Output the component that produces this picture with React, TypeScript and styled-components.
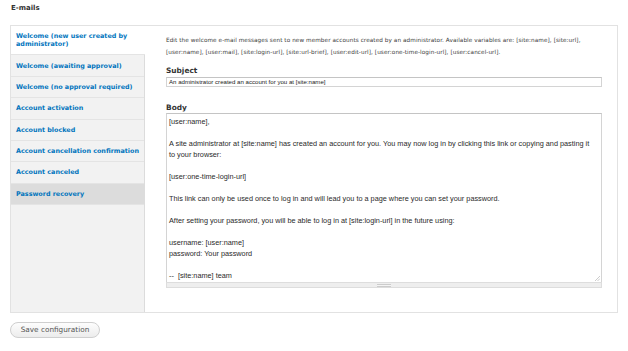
import React from 'react';
import styled, { createGlobalStyle } from 'styled-components';

const GlobalStyle = createGlobalStyle`
  html, body {
    margin: 0;
    padding: 0;
    background: #fff;
  }
  body {
    font-family: "DejaVu Sans", Verdana, sans-serif;
    color: #333;
  }
`;

const Page = styled.div`
  width: 628px;
  height: 351px;
  padding: 0 10px;
  box-sizing: border-box;
  overflow: hidden;
`;

const Title = styled.h2`
  margin: 0;
  height: 25px;
  padding: 4px 0 0 1px;
  box-sizing: border-box;
  font-size: 7px;
  line-height: 8px;
  font-weight: bold;
  color: #333;
`;

const Panel = styled.div`
  display: flex;
  width: 608px;
  height: 288px;
  box-sizing: border-box;
  border: 1px solid #e2e2e2;
`;

const TabList = styled.ul`
  list-style: none;
  margin: 0;
  padding: 0;
  width: 134px;
  flex-shrink: 0;
  background: #f2f2f2;
  border-right: 1px solid #dcdcdc;
  box-sizing: border-box;
`;

interface TabProps {
  $active?: boolean;
  $hover?: boolean;
}

const Tab = styled.li<TabProps>`
  padding: 6.2px 4px 6.2px 5px;
  line-height: 8px;
  font-size: 6.4px;
  font-weight: bold;
  color: #0074bd;
  white-space: nowrap;
  border-bottom: 1px solid #e4e4e4;
  background: ${(p) => (p.$active ? '#fff' : p.$hover ? '#dcdcdc' : 'transparent')};
  margin-right: ${(p) => (p.$active ? '-1px' : '0')};
  position: relative;
`;

const Content = styled.div`
  flex: 1;
  padding: 8px 15px 0 21px;
  box-sizing: border-box;
`;

const Description = styled.p`
  margin: 0;
  font-size: 5.7px;
  letter-spacing: 0.085px;
  line-height: 12px;
  color: #3a3a3a;
  white-space: nowrap;
`;

const Label = styled.div<{ $top: number }>`
  margin-top: ${(p) => p.$top}px;
  font-size: 7.4px;
  line-height: 10px;
  font-weight: bold;
  color: #333;
`;

const TextInput = styled.div`
  margin-top: 1px;
  height: 10px;
  box-sizing: border-box;
  border: 1px solid #d4d4d4;
  border-top-color: #c4c4c4;
  padding: 0 2px;
  font-family: "Liberation Sans", Arial, sans-serif;
  font-size: 6.1px;
  line-height: 8px;
  color: #222;
  white-space: nowrap;
`;

const TextAreaWrap = styled.div`
  width: 436px;
`;

const TextArea = styled.div`
  position: relative;
  height: 169px;
  box-sizing: border-box;
  border: 1px solid #d4d4d4;
  border-top-color: #c4c4c4;
  border-bottom: none;
  padding: 1.5px 2px 0;
  font-family: "Liberation Sans", Arial, sans-serif;
  font-size: 7.3px;
  line-height: 11px;
  color: #2a2a2a;
  white-space: pre;
  overflow: hidden;
`;

const ResizeCorner = styled.svg`
  position: absolute;
  right: 1px;
  bottom: 1px;
`;

const Grippie = styled.div`
  height: 6px;
  box-sizing: border-box;
  background: #eee;
  border: 1px solid #ddd;
  display: flex;
  justify-content: center;
  align-items: center;
`;

const GrippieHandle = styled.div`
  width: 14px;
  height: 3px;
  background: repeating-linear-gradient(
    to bottom,
    #ccc 0,
    #ccc 1px,
    #f4f4f4 1px,
    #f4f4f4 2px
  );
`;

const Actions = styled.div`
  padding-top: 4px;
`;

const Button = styled.button`
  width: 90px;
  height: 16px;
  border: 1px solid #cfcfcf;
  border-radius: 8px;
  background: linear-gradient(to bottom, #fdfdfd 0%, #ececec 100%);
  font-family: "DejaVu Sans", Verdana, sans-serif;
  font-size: 7.3px;
  color: #555;
  padding: 0;
`;

const tabs = [
  'Welcome (new user created by administrator)',
  'Welcome (awaiting approval)',
  'Welcome (no approval required)',
  'Account activation',
  'Account blocked',
  'Account cancellation confirmation',
  'Account canceled',
  'Password recovery',
];

const body = `[user:name],

A site administrator at [site:name] has created an account for you. You may now log in by clicking this link or copying and pasting it
to your browser:

[user:one-time-login-url]

This link can only be used once to log in and will lead you to a page where you can set your password.

After setting your password, you will be able to log in at [site:login-url] in the future using:

username: [user:name]
password: Your password

--  [site:name] team`;

const App = () => {
  return (
    <Page>
      <GlobalStyle />
      <Title>E-mails</Title>
      <Panel>
        <TabList>
          {tabs.map((t, i) => (
            <Tab key={t} $active={i === 0} $hover={i === tabs.length - 1}>
              {i === 0 ? (
                <>
                  Welcome (new user created by
                  <br />
                  administrator)
                </>
              ) : (
                t
              )}
            </Tab>
          ))}
        </TabList>
        <Content>
          <Description>
            Edit the welcome e-mail messages sent to new member accounts created by an administrator. Available variables are: [site:name], [site:url],
            <br />
            [user:name], [user:mail], [site:login-url], [site:url-brief], [user:edit-url], [user:one-time-login-url], [user:cancel-url].
          </Description>
          <Label $top={8}>Subject</Label>
          <TextInput>An administrator created an account for you at [site:name]</TextInput>
          <Label $top={16}>Body</Label>
          <TextAreaWrap>
            <TextArea>
              {body}
              <ResizeCorner width="6" height="6" viewBox="0 0 6 6">
                <path d="M6 1 L1 6 M6 3.5 L3.5 6" stroke="#aaa" strokeWidth="0.6" fill="none" />
              </ResizeCorner>
            </TextArea>
            <Grippie>
              <GrippieHandle />
            </Grippie>
          </TextAreaWrap>
        </Content>
      </Panel>
      <Actions>
        <Button>Save configuration</Button>
      </Actions>
    </Page>
  );
};

export default App;
